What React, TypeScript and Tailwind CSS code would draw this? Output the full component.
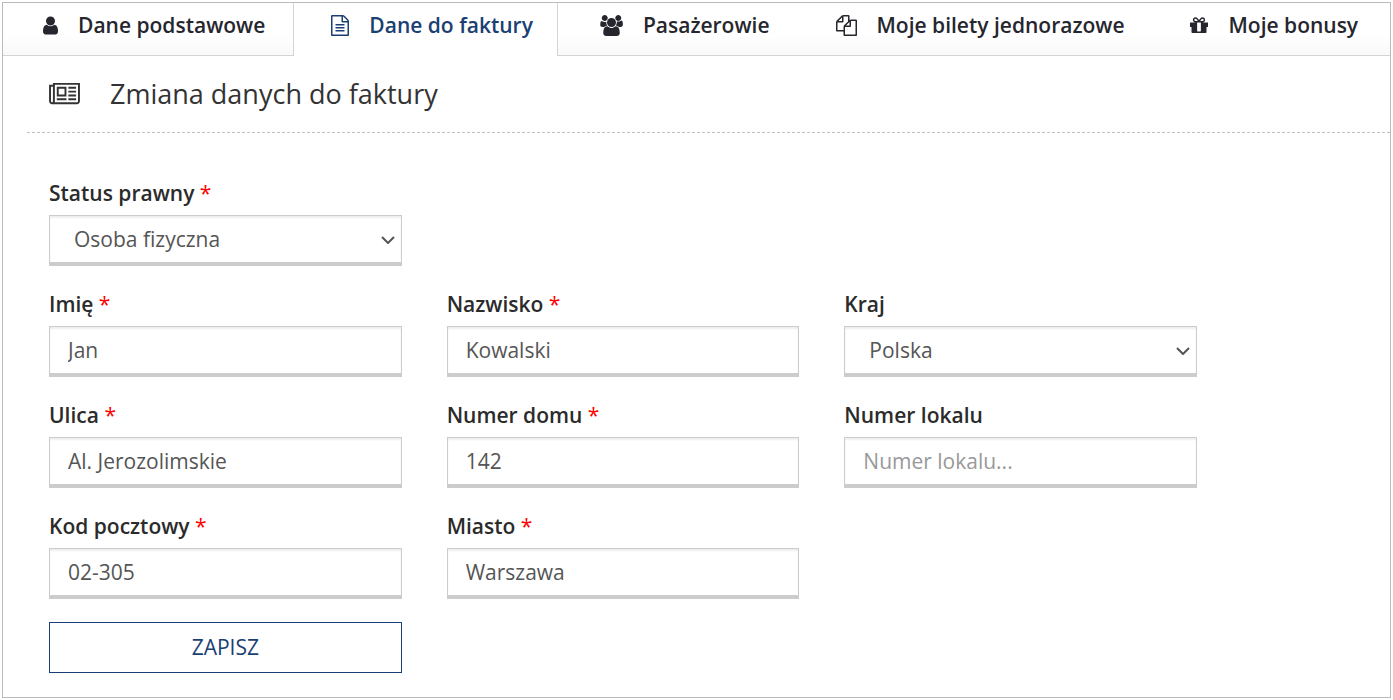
import React, { useState } from "react";

type IconShape = { viewBox: string; size: string; path: string };

const icons: Record<string, IconShape> = {
  user: {
    viewBox: "256 0 1280 1792",
    size: "h-[21px] w-[15px]",
    path: "M1536 1399q0 109-62.5 187t-150.5 78h-854q-88 0-150.5-78t-62.5-187q0-85 8.5-160.5t31.5-152 58.5-131 94-89 134.5-34.5q131 128 313 128t313-128q76 0 134.5 34.5t94 89 58.5 131 31.5 152 8.5 160.5zm-256-887q0 159-112.5 271.5t-271.5 112.5-271.5-112.5-112.5-271.5 112.5-271.5 271.5-112.5 271.5 112.5 112.5 271.5z",
  },
  file: {
    viewBox: "128 0 1536 1792",
    size: "h-[21px] w-[18px]",
    path: "M1596 380q28 28 48 76t20 88v1152q0 40-28 68t-68 28h-1344q-40 0-68-28t-28-68v-1600q0-40 28-68t68-28h896q40 0 88 20t76 48zm-444-244v376h376q-10-29-22-41l-313-313q-12-12-41-22zm384 1528v-1024h-416q-40 0-68-28t-28-68v-416h-768v1536h1280zm-1024-864q0-14 9-23t23-9h704q14 0 23 9t9 23v64q0 14-9 23t-23 9h-704q-14 0-23-9t-9-23v-64zm736 224q14 0 23 9t9 23v64q0 14-9 23t-23 9h-704q-14 0-23-9t-9-23v-64q0-14 9-23t23-9h704zm0 256q14 0 23 9t9 23v64q0 14-9 23t-23 9h-704q-14 0-23-9t-9-23v-64q0-14 9-23t23-9h704z",
  },
  group: {
    viewBox: "64 0 1920 1792",
    size: "h-[21px] w-[23px]",
    path: "M657 896q-162 5-265 128h-134q-82 0-138-40.5t-56-118.5q0-353 124-353 6 0 43.5 21t97.5 42.5 119 21.5q67 0 133-23-5 37-5 66 0 159 93 290zm1071 637q0 120-73 189.5t-194 69.5h-874q-121 0-194-69.5t-73-189.5q0-53 3.5-103.5t14-109 26.5-108.5 43-97.5 62-81 85.5-53.5 111.5-20q10 0 43 21.5t73 48 107 48 135 21.5 135-21.5 107-48 73-48 43-21.5q61 0 111.5 20t85.5 53.5 62 81 43 97.5 26.5 108.5 14 109 3.5 103.5zm-1024-1277q0 106-75 181t-181 75-181-75-75-181 75-181 181-75 181 75 75 181zm704 384q0 159-112.5 271.5t-271.5 112.5-271.5-112.5-112.5-271.5 112.5-271.5 271.5-112.5 271.5 112.5 112.5 271.5zm576 225q0 78-56 118.5t-138 40.5h-134q-103-123-265-128 93-131 93-290 0-29-5-66 66 23 133 23 59 0 119-21.5t97.5-42.5 43.5-21q124 0 124 353zm-128-609q0 106-75 181t-181 75-181-75-75-181 75-181 181-75 181 75 75 181z",
  },
  copies: {
    viewBox: "0 0 1792 1792",
    size: "h-[21px] w-[21px]",
    path: "M1696 384q40 0 68 28t28 68v1216q0 40-28 68t-68 28h-960q-40 0-68-28t-28-68v-288h-544q-40 0-68-28t-28-68v-672q0-40 20-88t48-76l408-408q28-28 76-48t88-20h416q40 0 68 28t28 68v328q68-40 128-40h416zm-544 213l-299 299h299v-299zm-640-384l-299 299h299v-299zm196 647l316-316v-416h-384v416q0 40-28 68t-68 28h-416v640h512v-256q0-40 20-88t48-76zm956 804v-1152h-384v416q0 40-28 68t-68 28h-416v640h896z",
  },
  gift: {
    viewBox: "128 0 1536 1792",
    size: "h-[21px] w-[18px]",
    path: "M1056 1356v-716h-320v716q0 25 18 38.5t46 13.5h192q28 0 46-13.5t18-38.5zm-456-844h195l-126-161q-26-31-69-31-40 0-68 28t-28 68 28 68 68 28zm688-96q0-40-28-68t-68-28q-43 0-69 31l-125 161h194q40 0 68-28t28-68zm376 256v320q0 14-9 23t-23 9h-96v416q0 40-28 68t-68 28h-1088q-40 0-68-28t-28-68v-416h-96q-14 0-23-9t-9-23v-320q0-14 9-23t23-9h440q-93 0-158.5-65.5t-65.5-158.5 65.5-158.5 158.5-65.5q107 0 168 77l128 165 128-165q61-77 168-77 93 0 158.5 65.5t65.5 158.5-65.5 158.5-158.5 65.5h440q14 0 23 9t9 23z",
  },
  newspaper: {
    viewBox: "0 0 2048 1792",
    size: "h-[27px] w-[31px]",
    path: "M1024 512h-384v384h384v-384zm128 640v128h-640v-128h640zm0-768v640h-640v-640h640zm640 768v128h-512v-128h512zm0-256v128h-512v-128h512zm0-256v128h-512v-128h512zm0-256v128h-512v-128h512zm-1536 960v-960h-128v960q0 26 19 45t45 19 45-19 19-45zm1664 0v-1088h-1536v1088q0 33-11 64h1483q26 0 45-19t19-45zm128-1216v1216q0 80-56 136t-136 56h-1664q-80 0-136-56t-56-136v-1088h256v-128h1792z",
  },
};

function Icon({ name }: { name: string }) {
  const icon = icons[name];
  return (
    <svg aria-hidden="true" viewBox={icon.viewBox} className={`${icon.size} shrink-0 fill-current`}>
      <path d={icon.path} />
    </svg>
  );
}

const tabs = [
  { icon: "user", label: "Dane podstawowe" },
  { icon: "file", label: "Dane do faktury", active: true },
  { icon: "group", label: "Pasażerowie" },
  { icon: "copies", label: "Moje bilety jednorazowe" },
  { icon: "gift", label: "Moje bonusy" },
];

function Tab({ icon, label, active }: { icon: string; label: string; active?: boolean }) {
  return (
    <a
      href="#"
      aria-current={active ? "page" : undefined}
      className={`flex items-start gap-5 pt-[7px] whitespace-nowrap ${
        active
          ? "border-x border-[#d4d4d4] bg-white pr-6 pl-[37px] text-[#1a4073]"
          : "border-b border-[#d4d4d4] bg-linear-to-b from-white from-60% to-[#f9f9f9] pr-6 pl-[42px] text-[#26262e] first:pr-7 first:pl-10 last:flex-1"
      }`}
    >
      <span className="flex h-[31px] items-center">
        <Icon name={icon} />
      </span>
      <span className="leading-[30px]">{label}</span>
    </a>
  );
}

const controlClass =
  "block h-[51px] w-full appearance-none rounded-none border border-b-4 border-[#ccc] bg-white text-[21px] text-[#555] shadow-[inset_0_2px_2px_rgba(0,0,0,0.07)] outline-none placeholder:text-[#999] focus:border-[#1a4073]";

type FieldProps = {
  id: string;
  label: string;
  required?: boolean;
  value?: string;
  options?: string[];
  placeholder?: string;
  className?: string;
};

function Field({ id, label, required, value = "", options, placeholder, className = "" }: FieldProps) {
  const [current, setCurrent] = useState(value);
  return (
    <div className={className}>
      <label htmlFor={id} className="mb-1.5 block text-[21px] leading-[31px] font-semibold text-[#2b2b2b]">
        {label}
        {required && <span className="font-normal text-[#f00]"> *</span>}
      </label>
      {options ? (
        <div className="relative">
          <select
            id={id}
            value={current}
            onChange={(e) => setCurrent(e.target.value)}
            className={`${controlClass} pt-0.5 pr-10 pl-6`}
          >
            {options.map((o) => (
              <option key={o}>{o}</option>
            ))}
          </select>
          <svg
            aria-hidden="true"
            viewBox="0 0 14 8"
            className="pointer-events-none absolute top-[21px] right-[7px] h-2 w-3.5 fill-none stroke-[#555] stroke-2"
          >
            <path d="M1 1l6 6 6-6" />
          </svg>
        </div>
      ) : (
        <input
          id={id}
          type="text"
          value={current}
          placeholder={placeholder}
          onChange={(e) => setCurrent(e.target.value)}
          className={`${controlClass} px-[18px]`}
        />
      )}
    </div>
  );
}

export default function App() {
  return (
    <div className="min-h-screen bg-white p-0.5 font-['Open_Sans',sans-serif]">
      <main className="overflow-hidden border border-[#bbb]">
        <nav className="flex h-[53px] text-[21px] font-semibold">
          {tabs.map((tab) => (
            <Tab key={tab.label} {...tab} />
          ))}
        </nav>

        <header className="ml-6 flex items-center gap-[30px] border-b border-dashed border-[#c0c0cc] pt-[18px] pb-[18px] pl-[22px] text-[#333]">
          <Icon name="newspaper" />
          <h1 className="text-[27px] leading-10">Zmiana danych do faktury</h1>
        </header>

        <form
          className="grid grid-cols-3 gap-x-[45px] gap-y-[23px] pt-[45px] pr-[193px] pb-6 pl-[46px]"
          onSubmit={(e) => e.preventDefault()}
        >
          <Field id="status" label="Status prawny" required value="Osoba fizyczna" options={["Osoba fizyczna", "Firma"]} className="col-span-3 w-[calc((100%-90px)/3)]" />
          <Field id="imie" label="Imię" required value="Jan" />
          <Field id="nazwisko" label="Nazwisko" required value="Kowalski" />
          <Field id="kraj" label="Kraj" value="Polska" options={["Polska", "Niemcy", "Czechy"]} />
          <Field id="ulica" label="Ulica" required value="Al. Jerozolimskie" />
          <Field id="dom" label="Numer domu" required value="142" />
          <Field id="lokal" label="Numer lokalu" placeholder="Numer lokalu..." />
          <Field id="kod" label="Kod pocztowy" required value="02-305" />
          <Field id="miasto" label="Miasto" required value="Warszawa" />
          <button type="submit" className="col-start-1 h-[51px] border border-[#1a4073] bg-white text-[21px] text-[#1a4073]">
            ZAPISZ
          </button>
        </form>
      </main>
    </div>
  );
}
